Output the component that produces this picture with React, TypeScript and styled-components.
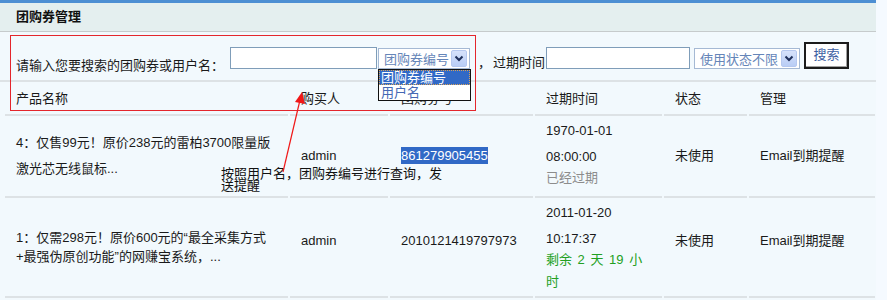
import React from "react";
import styled, { createGlobalStyle } from "styled-components";

const GlobalStyle = createGlobalStyle`
	html, body {
		margin: 0;
		padding: 0;
		background: #f5faff;
	}
`;

const Page = styled.div`
	position: relative;
	width: 876px;
	min-height: 300px;
	background: #f2f9fd;
	font-family: "Liberation Sans", "Noto Sans CJK SC", sans-serif;
	font-size: 13px;
	color: #1a1a1a;
	overflow: hidden;
`;

const TopStripe = styled.div`
	height: 3px;
	background: #4d8fd3;
`;

const TitleBar = styled.div`
	height: 28px;
	line-height: 28px;
	padding-left: 16px;
	background: #e4efef;
	border-bottom: 1px solid #c6cbcc;
	font-weight: bold;
	color: #111;
`;

const SearchRow = styled.div`
	display: flex;
	align-items: flex-start;
	height: 38px;
	padding: 10px 0 0 16px;
	border-bottom: 2px solid #dde2e5;
`;

const Label = styled.span<{ $dy: number; $ml?: number }>`
	margin-top: ${(p) => p.$dy}px;
	margin-left: ${(p) => p.$ml || 0}px;
	line-height: 16px;
	white-space: nowrap;
`;

const TextInput = styled.input<{ $w: number; $ml: number }>`
	box-sizing: border-box;
	margin: 5px 0 0 ${(p) => p.$ml}px;
	width: ${(p) => p.$w}px;
	height: 22px;
	padding: 0 3px;
	border: 1px solid #7f9db9;
	background: #fff;
	outline: none;
`;

const SelectBox = styled.div<{ $w: number; $ml: number }>`
	box-sizing: border-box;
	display: flex;
	align-items: center;
	justify-content: space-between;
	margin: 6px 0 0 ${(p) => p.$ml}px;
	width: ${(p) => p.$w}px;
	height: 21px;
	padding: 0 2px 0 5px;
	border: 1px solid #a5b9d4;
	background: #fff;
	color: #6585b8;
	white-space: nowrap;
`;

const SelectArrow = styled.span`
	display: flex;
	align-items: center;
	justify-content: center;
	box-sizing: border-box;
	width: 16px;
	height: 17px;
	border: 1px solid #b5c8ef;
	border-radius: 2px;
	background: linear-gradient(#d6e2fb, #b9cdf5);
`;

const SearchButton = styled.button`
	box-sizing: border-box;
	margin-left: 4px;
	width: 45px;
	height: 27px;
	padding: 0 0 6px;
	border: 2px solid #1b1b1b;
	box-shadow: inset -1px -1px 0 #a0a0a0;
	background: #fff;
	color: #3d5fa3;
	font-family: inherit;
	font-size: 13px;
`;

const Table = styled.table`
	margin-left: 3px;
	width: 874px;
	table-layout: fixed;
	border-collapse: separate;
	border-spacing: 2px 0;
`;

const Row = styled.tr<{ $h: number }>`
	height: ${(p) => p.$h}px;
`;

const HeadCell = styled.th`
	height: 30px;
	padding: 0 0 2px 11px;
	border-bottom: 2px solid #dde2e5;
	text-align: left;
	font-weight: normal;
	vertical-align: middle;
`;

const Cell = styled.td<{ $lh?: number; $raise?: boolean }>`
	padding: 0 0 ${(p) => (p.$raise ? 12 : 0)}px 11px;
	border-bottom: 2px solid #dde2e5;
	line-height: ${(p) => p.$lh || 16}px;
	vertical-align: middle;
`;

const DateCell = styled.td`
	padding: 2px 0 0 11px;
	border-bottom: 2px solid #dde2e5;
	vertical-align: top;
`;

const DateLine = styled.div`
	line-height: 26px;
`;

const Remain = styled.div<{ $tone: "gray" | "green" }>`
	width: 99px;
	margin-top: -3px;
	line-height: 22px;
	word-spacing: 2px;
	color: ${(p) => (p.$tone === "green" ? "#22a022" : "#8c8c8c")};
`;

const Selected = styled.span`
	padding: 1px 0;
	background: #3169c6;
	color: #fff;
`;

const RedFrame = styled.div`
	position: absolute;
	left: 10px;
	top: 35px;
	width: 464px;
	height: 74px;
	border: 1px solid #e4262c;
	pointer-events: none;
`;

const DropList = styled.div`
	position: absolute;
	left: 378px;
	top: 69px;
	width: 91px;
	border: 1px solid #111;
	background: #fff;
`;

const DropItem = styled.div<{ $active?: boolean }>`
	box-sizing: border-box;
	height: 15px;
	line-height: 14px;
	padding-left: 1px;
	color: ${(p) => (p.$active ? "#fff" : "#4568b4")};
	background: ${(p) => (p.$active ? "#3169c6" : "transparent")};
	border: 1px dotted ${(p) => (p.$active ? "#d8a25a" : "transparent")};
`;

const Note = styled.div`
	position: absolute;
	left: 221px;
	top: 168px;
	width: 224px;
	line-height: 12px;
	color: #111;
`;

const Pointer = styled.svg`
	position: absolute;
	left: 278px;
	top: 88px;
	pointer-events: none;
`;

const Chevron = () => (
	<svg width="10" height="7" viewBox="0 0 10 7">
		<path d="M1.5 1.5 L5 5 L8.5 1.5" fill="none" stroke="#1f2f5a" strokeWidth="2" />
	</svg>
);

const App = () => {
	return (
		<Page>
			<GlobalStyle />
			<TopStripe />
			<TitleBar>团购券管理</TitleBar>
			<SearchRow>
				<Label $dy={16}>请输入您要搜索的团购券或用户名：</Label>
				<TextInput $w={147} $ml={6} readOnly />
				<SelectBox $w={92} $ml={1}>
					团购券编号
					<SelectArrow>
						<Chevron />
					</SelectArrow>
				</SelectBox>
				<Label $dy={13} $ml={8}>，</Label>
				<Label $dy={13} $ml={2}>过期时间</Label>
				<TextInput $w={144} $ml={1} readOnly />
				<SelectBox $w={106} $ml={4}>
					使用状态不限
					<SelectArrow>
						<Chevron />
					</SelectArrow>
				</SelectBox>
				<SearchButton>搜索</SearchButton>
			</SearchRow>
			<Table>
				<colgroup>
					<col style={{ width: 283 }} />
					<col style={{ width: 98 }} />
					<col style={{ width: 143 }} />
					<col style={{ width: 127 }} />
					<col style={{ width: 83 }} />
					<col style={{ width: 126 }} />
				</colgroup>
				<thead>
					<tr>
						<HeadCell>产品名称</HeadCell>
						<HeadCell>购买人</HeadCell>
						<HeadCell>团购券号</HeadCell>
						<HeadCell>过期时间</HeadCell>
						<HeadCell>状态</HeadCell>
						<HeadCell>管理</HeadCell>
					</tr>
				</thead>
				<tbody>
					<Row $h={82}>
						<Cell $lh={26}>
							4：仅售99元！原价238元的雷柏3700限量版
							<br />
							激光芯无线鼠标...
						</Cell>
						<Cell>admin</Cell>
						<Cell>
							<Selected>861279905455</Selected>
						</Cell>
						<DateCell>
							<DateLine>1970-01-01</DateLine>
							<DateLine>08:00:00</DateLine>
							<Remain $tone="gray">已经过期</Remain>
						</DateCell>
						<Cell>未使用</Cell>
						<Cell>Email到期提醒</Cell>
					</Row>
					<Row $h={100}>
						<Cell $lh={19}>
							1：仅需298元！原价600元的“最全采集方式
							<br />
							+最强伪原创功能”的网赚宝系统，...
						</Cell>
						<Cell $raise>admin</Cell>
						<Cell $raise>2010121419797973</Cell>
						<DateCell>
							<DateLine>2011-01-20</DateLine>
							<DateLine>10:17:37</DateLine>
							<Remain $tone="green">剩余 2 天 19 小时</Remain>
						</DateCell>
						<Cell $raise>未使用</Cell>
						<Cell $raise>Email到期提醒</Cell>
					</Row>
				</tbody>
			</Table>
			<RedFrame />
			<DropList>
				<DropItem $active>团购券编号</DropItem>
				<DropItem>用户名</DropItem>
			</DropList>
			<Note>按照用户名，团购券编号进行查询，发送提醒</Note>
			<Pointer width="32" height="90" viewBox="0 0 32 90">
				<line x1="5" y1="84" x2="22" y2="12" stroke="#f01818" strokeWidth="1.2" />
				<polygon points="24,4 27,16 17,14" fill="#f01818" />
			</Pointer>
		</Page>
	);
};

export default App;
